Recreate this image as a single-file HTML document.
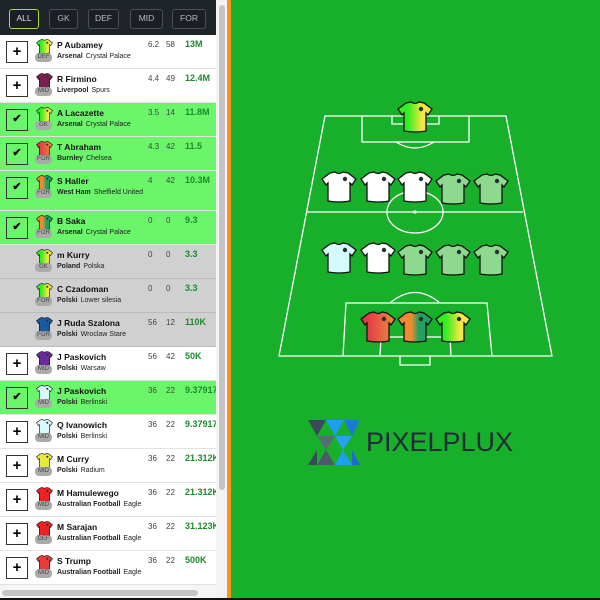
<!DOCTYPE html>
<html><head><meta charset="utf-8"><style>
*{margin:0;padding:0;box-sizing:border-box}
body{width:600px;height:600px;overflow:hidden;background:#18b02a;font-family:"Liberation Sans",Arial,sans-serif;position:relative}
#left{position:absolute;left:0;top:0;width:216px;height:598px;background:#fff;overflow:hidden}
#hdr{height:35px;background:#1f242b;position:relative}
.fb{position:absolute;top:9px;height:20px;border:1.5px solid #4a4f55;border-radius:3px;color:#bbb;font-size:8.5px;text-align:center;line-height:17px;background:#1b1f25}
.row{position:absolute;left:0;width:216px;height:34px;border-bottom:1px solid #e2e2e2;background:#fff}
.g{background:#6af56a}
.gr{background:#d0d0d0;border-bottom-color:#bbb}
.btn{position:absolute;left:6px;top:6px;width:22px;height:22px;border:1.5px solid #333;font-size:15px;font-weight:bold;text-align:center;line-height:19px;color:#000}
.ck{font-size:11px}
.sh{position:absolute;left:36px;top:4px}
.bd{position:absolute;left:35px;top:18px;width:17px;height:9px;border-radius:4px;background:#aaa;color:#444;font-size:6px;line-height:9px;text-align:center}
.nm{position:absolute;left:57px;top:5px;font-size:8.5px;font-weight:bold;color:#111}
.cl{position:absolute;left:57px;top:17px;font-size:7px;color:#222;width:88px;line-height:10px}
.cl b{margin-right:3px}
.s1{position:absolute;left:148px;top:5px;font-size:8px;color:#444}
.s2{position:absolute;left:166px;top:5px;font-size:8px;color:#444}
.pr{position:absolute;left:185px;top:4px;font-size:9px;font-weight:bold;color:#1e8a2e;white-space:nowrap}
</style></head><body>
<svg width="0" height="0" style="position:absolute"><defs>
<symbol id="shirt" viewBox="0 0 36 32"><path d="M9,2 L14,1 Q18,4 22,1 L27,2 L35,8 L31,14 L29,12 L29,30 Q18,32 7,30 L7,12 L5,14 L1,8 Z" stroke="#111" stroke-width="1.3"/><circle cx="24" cy="8" r="2.2" fill="#233" /></symbol>
<linearGradient id="gy"><stop offset="0.3" stop-color="#33ee22"/><stop offset="0.7" stop-color="#f5e640"/></linearGradient>
<linearGradient id="ro"><stop offset="0" stop-color="#dd2a44"/><stop offset="1" stop-color="#f08a40"/></linearGradient>
<linearGradient id="og"><stop offset="0.4" stop-color="#f08a30"/><stop offset="0.6" stop-color="#22a060"/></linearGradient>
</defs></svg>

<div id="left">
<div id="hdr">
<div class="fb" style="left:9px;width:30px;border-color:#a8d83a;color:#ddd">ALL</div>
<div class="fb" style="left:49px;width:29px">GK</div>
<div class="fb" style="left:88px;width:31px">DEF</div>
<div class="fb" style="left:130px;width:33px">MID</div>
<div class="fb" style="left:172px;width:34px">FOR</div>
</div>

<div class="row" style="top:35px"><div class="btn">+</div><svg class="sh" width="17" height="15" fill="url(#gy)"><use href="#shirt"/></svg><div class="bd">DEF</div><div class="nm">P Aubamey</div><div class="cl"><b>Arsenal</b>Crystal Palace</div><div class="s1">6.2</div><div class="s2">58</div><div class="pr">13M</div></div>
<div class="row" style="top:69px"><div class="btn">+</div><svg class="sh" width="17" height="15" fill="#7a2050"><use href="#shirt"/></svg><div class="bd">MID</div><div class="nm">R Firmino</div><div class="cl"><b>Liverpool</b>Spurs</div><div class="s1">4.4</div><div class="s2">49</div><div class="pr">12.4M</div></div>
<div class="row g" style="top:103px"><div class="btn ck">✔</div><svg class="sh" width="17" height="15" fill="url(#gy)"><use href="#shirt"/></svg><div class="bd">GK</div><div class="nm">A Lacazette</div><div class="cl"><b>Arsenal</b>Crystal Palace</div><div class="s1">3.5</div><div class="s2">14</div><div class="pr">11.8M</div></div>
<div class="row g" style="top:137px"><div class="btn ck">✔</div><svg class="sh" width="17" height="15" fill="url(#ro)"><use href="#shirt"/></svg><div class="bd">FOR</div><div class="nm">T Abraham</div><div class="cl"><b>Burnley</b>Chelsea</div><div class="s1">4.3</div><div class="s2">42</div><div class="pr">11.5</div></div>
<div class="row g" style="top:171px;height:40px"><div class="btn ck">✔</div><svg class="sh" width="17" height="15" fill="url(#og)"><use href="#shirt"/></svg><div class="bd">FOR</div><div class="nm">S Haller</div><div class="cl"><b>West Ham</b>Sheffield United</div><div class="s1">4</div><div class="s2">42</div><div class="pr">10.3M</div></div>
<div class="row g" style="top:211px"><div class="btn ck">✔</div><svg class="sh" width="17" height="15" fill="url(#og)"><use href="#shirt"/></svg><div class="bd">FOR</div><div class="nm">B Saka</div><div class="cl"><b>Arsenal</b>Crystal Palace</div><div class="s1">0</div><div class="s2">0</div><div class="pr">9.3</div></div>
<div class="row gr" style="top:245px"><svg class="sh" width="17" height="15" fill="url(#gy)"><use href="#shirt"/></svg><div class="bd">GK</div><div class="nm">m Kurry</div><div class="cl"><b>Poland</b>Polska</div><div class="s1">0</div><div class="s2">0</div><div class="pr">3.3</div></div>
<div class="row gr" style="top:279px"><svg class="sh" width="17" height="15" fill="url(#gy)"><use href="#shirt"/></svg><div class="bd">FOR</div><div class="nm">C Czadoman</div><div class="cl"><b>Polski</b>Lower silesia</div><div class="s1">0</div><div class="s2">0</div><div class="pr">3.3</div></div>
<div class="row gr" style="top:313px"><svg class="sh" width="17" height="15" fill="#1a5aa0"><use href="#shirt"/></svg><div class="bd">FOR</div><div class="nm">J Ruda Szalona</div><div class="cl"><b>Polski</b>Wroclaw Stare</div><div class="s1">56</div><div class="s2">12</div><div class="pr">110K</div></div>
<div class="row" style="top:347px"><div class="btn">+</div><svg class="sh" width="17" height="15" fill="#6a2a9a"><use href="#shirt"/></svg><div class="bd">MID</div><div class="nm">J Paskovich</div><div class="cl"><b>Polski</b>Warsaw</div><div class="s1">56</div><div class="s2">42</div><div class="pr">50K</div></div>
<div class="row g" style="top:381px"><div class="btn ck">✔</div><svg class="sh" width="17" height="15" fill="#d8faff"><use href="#shirt"/></svg><div class="bd">MID</div><div class="nm">J Paskovich</div><div class="cl"><b>Polski</b>Berlinski</div><div class="s1">36</div><div class="s2">22</div><div class="pr">9.37917</div></div>
<div class="row" style="top:415px"><div class="btn">+</div><svg class="sh" width="17" height="15" fill="#d8faff"><use href="#shirt"/></svg><div class="bd">MID</div><div class="nm">Q Ivanowich</div><div class="cl"><b>Polski</b>Berlinski</div><div class="s1">36</div><div class="s2">22</div><div class="pr">9.37917</div></div>
<div class="row" style="top:449px"><div class="btn">+</div><svg class="sh" width="17" height="15" fill="#e8e840"><use href="#shirt"/></svg><div class="bd">MID</div><div class="nm">M Curry</div><div class="cl"><b>Polski</b>Radium</div><div class="s1">36</div><div class="s2">22</div><div class="pr">21.312K</div></div>
<div class="row" style="top:483px"><div class="btn">+</div><svg class="sh" width="17" height="15" fill="#ee2222"><use href="#shirt"/></svg><div class="bd">MID</div><div class="nm">M Hamulewego</div><div class="cl"><b>Australian Football</b>Eagle</div><div class="s1">36</div><div class="s2">22</div><div class="pr">21.312K</div></div>
<div class="row" style="top:517px"><div class="btn">+</div><svg class="sh" width="17" height="15" fill="#ee2222"><use href="#shirt"/></svg><div class="bd">DEF</div><div class="nm">M Sarajan</div><div class="cl"><b>Australian Football</b>Eagle</div><div class="s1">36</div><div class="s2">22</div><div class="pr">31.123K</div></div>
<div class="row" style="top:551px"><div class="btn">+</div><svg class="sh" width="17" height="15" fill="#e83a3a"><use href="#shirt"/></svg><div class="bd">MID</div><div class="nm">S Trump</div><div class="cl"><b>Australian Football</b>Eagle</div><div class="s1">36</div><div class="s2">22</div><div class="pr">500K</div></div>
<div style="position:absolute;left:0;top:585px;width:216px;height:13px;background:#f5f5f5"></div>
<div style="position:absolute;left:2px;top:590px;width:196px;height:6px;border-radius:3px;background:#c4c4c4"></div>
</div>
<div style="position:absolute;left:216px;top:0;width:11px;height:598px;background:#f3f3f3"></div>
<div style="position:absolute;left:219px;top:5px;width:6px;height:485px;border-radius:3px;background:#c4c4c4"></div>
<div style="position:absolute;left:227px;top:0;width:4px;height:598px;background:#f7931e"></div>
<div style="position:absolute;left:0;top:598px;width:600px;height:2px;background:#111"></div>

<svg style="position:absolute;left:0;top:0" width="600" height="600">
<g fill="none" stroke="#fff" stroke-width="1.3">
<path d="M325,116 L506,116 L552,356 L279,356 Z"/>
<path d="M306,212 L523,212"/>
<ellipse cx="415" cy="212" rx="28" ry="21"/>
<circle cx="415" cy="212" r="1" fill="#fff"/>
<path d="M362,116 L362,142 L469,142 L469,116"/>
<path d="M392,116 L392,124 L439,124 L439,116"/>
<path d="M396,142 Q415,154 434,142"/>
<path d="M343,356 L346,303 L487,303 L492,356"/>
<path d="M380,356 L381,337 L450,337 L451,356"/>
<path d="M400,356 L400,365 L430,365 L430,356"/>
<path d="M390,303 Q415,282 440,303"/>
</g>
<g>
<svg x="397" y="101" width="36" height="32" fill="url(#gy)"><use href="#shirt"/></svg>
<svg x="321" y="171" width="36" height="32" fill="#fff"><use href="#shirt"/></svg>
<svg x="360" y="171" width="36" height="32" fill="#fff"><use href="#shirt"/></svg>
<svg x="397" y="171" width="36" height="32" fill="#fff"><use href="#shirt"/></svg>
<svg x="435" y="173" width="36" height="32" fill="#8fd88f"><use href="#shirt"/></svg>
<svg x="473" y="173" width="36" height="32" fill="#8fd88f"><use href="#shirt"/></svg>
<svg x="321" y="242" width="36" height="32" fill="#d4faff"><use href="#shirt"/></svg>
<svg x="360" y="242" width="36" height="32" fill="#fff"><use href="#shirt"/></svg>
<svg x="397" y="244" width="36" height="32" fill="#8fd88f"><use href="#shirt"/></svg>
<svg x="435" y="244" width="36" height="32" fill="#8fd88f"><use href="#shirt"/></svg>
<svg x="473" y="244" width="36" height="32" fill="#8fd88f"><use href="#shirt"/></svg>
<svg x="360" y="311" width="36" height="32" fill="url(#ro)"><use href="#shirt"/></svg>
<svg x="397" y="311" width="36" height="32" fill="url(#og)"><use href="#shirt"/></svg>
<svg x="435" y="311" width="36" height="32" fill="url(#gy)"><use href="#shirt"/></svg>
</g>
<g>
<polygon points="308,420 326,420 317,436" fill="#3a4a5a"/>
<polygon points="326,420 344,420 335,436" fill="#1e9ef0"/>
<polygon points="344,420 360,420 352,436" fill="#1a7ad8"/>
<polygon points="317,436 335,436 326,450" fill="#5a6a7a"/>
<polygon points="335,436 352,436 343,450" fill="#2aa0f0"/>
<polygon points="326,450 317,465 335,465" fill="#4a5a6a"/>
<polygon points="343,450 335,465 352,465" fill="#1e9ef0"/>
<polygon points="308,465 317,450 317,465" fill="#3a4a5a"/>
<polygon points="352,465 352,450 360,465" fill="#1a6ad0"/>
</g>
<text x="366" y="451" font-family="Liberation Sans, Arial, sans-serif" font-size="27" fill="#222c38" textLength="147" lengthAdjust="spacingAndGlyphs">PIXELPLUX</text>
</svg>
</body></html>
